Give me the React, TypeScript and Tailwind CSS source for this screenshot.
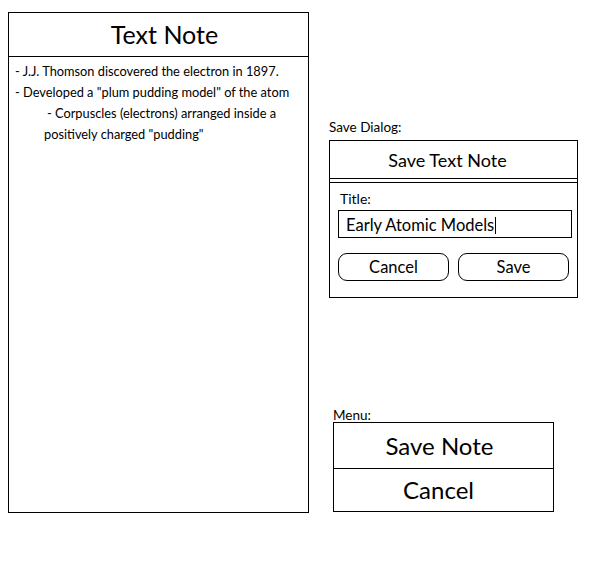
export default function App() {
  return (
    <div className="min-h-[588px] bg-white text-black font-['Lato','Open_Sans',sans-serif]">
      <div className="flex gap-[20px] pl-[8px] pt-[12px]">
        <NotePanel />
        <div className="flex w-[249px] flex-col">
          <SaveDialog />
          <Menu />
        </div>
      </div>
    </div>
  )
}

function NotePanel() {
  return (
    <div className="flex h-[501px] w-[301px] flex-col border border-black">
      <div className="flex h-[44px] items-center justify-center border-b border-black pl-[12px] text-[25px]">
        Text Note
      </div>
      <div className="pl-[6px] pt-[4px] text-[12.8px] leading-[21px]">
        <p>- J.J. Thomson discovered the electron in 1897.</p>
        <p>- Developed a "plum pudding model" of the atom</p>
        <p className="ml-[29px] indent-[3px]">
          - Corpuscles (electrons) arranged inside a positively charged "pudding"
        </p>
      </div>
    </div>
  )
}

function SaveDialog() {
  return (
    <div className="mt-[106px]">
      <div className="text-[13.5px] leading-[18px]">Save Dialog:</div>
      <div className="mt-[4px] h-[158px] border border-black">
        <div className="flex h-[38px] items-center justify-center border-b border-black pr-[12px] pt-[2px] text-[18px]">
          Save Text Note
        </div>
        <div className="mt-[3px] border-t border-black px-[8px]">
          <div className="pl-[2px] pt-[7px] text-[14px] leading-[18px]">Title:</div>
          <div className="mt-[2px] flex h-[28px] w-[234px] items-center border border-black pl-[7px] pt-[2px] text-[16.5px]">
            Early Atomic Models
            <span className="ml-[1px] inline-block h-[17px] w-px bg-black" />
          </div>
          <div className="mt-[15px] flex gap-[9px]">
            <button className="flex h-[28px] w-[112px] items-center justify-center rounded-[9px] border border-black pt-[1px] text-[16.5px]">
              Cancel
            </button>
            <button className="flex h-[28px] w-[112px] items-center justify-center rounded-[9px] border border-black pt-[1px] text-[16.5px]">
              Save
            </button>
          </div>
        </div>
      </div>
    </div>
  )
}

function Menu() {
  return (
    <div className="ml-[4px] mt-[108px]">
      <div className="text-[13.5px] leading-[18px]">Menu:</div>
      <div className="mt-[-2px] w-[221px] border border-black">
        <div className="flex h-[46px] items-center justify-center border-b border-black pr-[8px] text-[24px]">
          Save Note
        </div>
        <div className="flex h-[42px] items-center justify-center pr-[10px] text-[24px]">
          Cancel
        </div>
      </div>
    </div>
  )
}
